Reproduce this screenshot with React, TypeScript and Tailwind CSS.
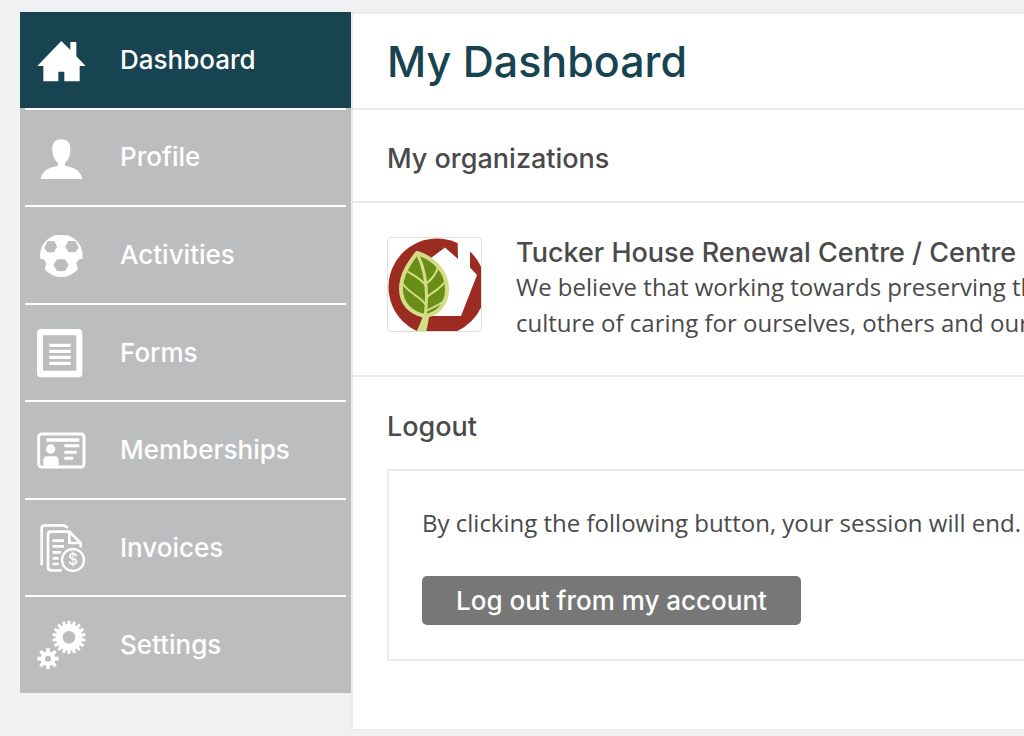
import React, { useState } from "react";

interface MenuItem {
  label: string;
  icon: React.ReactNode;
}

interface GearProps {
  cx: number;
  cy: number;
  body: number;
  outer: number;
  hole: number;
  teeth: number;
  tooth: number;
}

const Gear: React.FC<GearProps> = ({ cx, cy, body, outer, hole, teeth, tooth }) => (
  <g>
    <circle cx={cx} cy={cy} r={(body + hole) / 2} fill="none" stroke="currentColor" strokeWidth={body - hole} />
    {Array.from({ length: teeth }, (_, i) => (
      <rect
        key={i}
        x={cx - tooth / 2}
        y={cy - outer}
        width={tooth}
        height={outer - body + 3}
        rx={2}
        transform={`rotate(${(360 / teeth) * i} ${cx} ${cy})`}
      />
    ))}
  </g>
);

const HomeIcon = () => (
  <path d="M73 15 100 42V18h18v43l28 29h-18v46H82v-29H64v29H19V90H1z" />
);

const ProfileIcon = () => (
  <path d="M73 19C93 19 101 31 100 51C99 71 93 83 84 90V98C108 104 131 109 136 138H11C16 109 39 104 63 98V90C54 83 47 71 46 51C45 31 53 19 73 19Z" />
);

const BallIcon = () => (
  <g>
    <circle cx="73" cy="74" r="64" />
    <g fill="#bcbdbf">
      <path d="M32 30h20l8 17-10 17H31L22 50z" />
      <path d="M115 30H94l-9 17 10 17h20l10-14z" />
      <path d="M60 85h24l11 17-11 18H60l-11-18z" />
      <path d="M57 8h33l-5 5-12-1-11 1z" />
      <path d="M5 84h14l9 13-5 16H5z" />
      <path d="M141 84h-14l-9 13 5 16h18z" />
    </g>
    <path
      d="M60 47h25M50 64l10 21M95 64 84 85M28 97l21 5M118 97l-23 5M60 120l-8 12M84 120l8 12M31 64 19 84M115 64l12 20"
      fill="none"
      stroke="#e8e9ea"
      strokeWidth="1"
    />
  </g>
);

const FormIcon = () => (
  <g>
    <path fillRule="evenodd" d="M12 0h112a12 12 0 0 1 12 12v121a12 12 0 0 1-12 12H12a12 12 0 0 1-12-12V12A12 12 0 0 1 12 0zM18 19v106h100V19z" />
    <path d="M37 44h64v10H37zM37 62h64v10H37zM37 80h64v10H37zM37 98h64v10H37z" />
  </g>
);

const CardIcon = () => (
  <g>
    <rect x="5" y="24" width="136" height="99" rx="9" fill="none" stroke="currentColor" strokeWidth="9" />
    <path d="M28 37h99v10H28zM82 55h45v9H82zM82 74h37v9H82zM82 92h27v9H82z" />
    <circle cx="41" cy="69" r="14" />
    <path d="M19 124V103q0-12 12-12h22q12 0 12 12v21z" />
  </g>
);

const InvoiceIcon = () => (
  <g fill="none" stroke="currentColor" strokeWidth="8" strokeLinecap="round" strokeLinejoin="round">
    <path d="M14 121V14q0-10 10-10h53q7 0 13 6" />
    <path d="M71 139H42q-9 0-9-9V32q0-9 9-9h55l34 34v10M97 23v34h34" />
    <path d="M47 50h34M47 67h34M47 85h25M47 103h18M47 120h18" strokeLinecap="butt" />
    <circle cx="108" cy="108" r="33" strokeWidth="7" />
    <text
      x="108"
      y="124"
      textAnchor="middle"
      fill="currentColor"
      stroke="none"
      className="font-['Inter'] text-[46px] font-medium"
    >
      $
    </text>
  </g>
);

const SettingsIcon = () => (
  <g>
    <Gear cx={96} cy={49} body={40} outer={50} hole={19} teeth={18} tooth={9} />
    <Gear cx={33} cy={113} body={22} outer={32} hole={9} teeth={8} tooth={11} />
  </g>
);

const menu: MenuItem[] = [
  { label: "Dashboard", icon: <HomeIcon /> },
  { label: "Profile", icon: <ProfileIcon /> },
  { label: "Activities", icon: <BallIcon /> },
  { label: "Forms", icon: <FormIcon /> },
  { label: "Memberships", icon: <CardIcon /> },
  { label: "Invoices", icon: <InvoiceIcon /> },
  { label: "Settings", icon: <SettingsIcon /> },
];

const OrganizationLogo = () => (
  <svg viewBox="1 1 93 93" className="size-full" role="img" aria-label="Tucker House">
    <circle cx="50" cy="50" r="48.500" fill="#9c2c22" />
    <path d="M44 21 58 10.500 71 22 70.500 0H83v30.500L90 38 74 79H44z" fill="#fff" />
    <path d="M37 78C36 84 33 89 30 96H38C39 90 41 84 41 78Z" fill="#d3de87" stroke="#d3de87" strokeWidth="2" />
    <path
      d="M30 16C23 25 14 37 14 52C14 66 23 76 38 79C52 77 60 66 60 52C60 35 47 21 30 16Z"
      fill="#698d16"
      stroke="#d3de87"
      strokeWidth="4"
      strokeLinejoin="round"
    />
    <path
      d="M30 16C37 30 42 52 38 80"
      fill="none"
      stroke="#d3de87"
      strokeWidth="3"
    />
    <path
      d="M20 34C26 38 35 42 39 49M51 29C50 36 46 41 40 46M16 47C23 57 34 60 39 68M59 43C55 51 47 54 40 60M57 64C51 69 46 70 39 74"
      fill="none"
      stroke="#d3de87"
      strokeWidth="2"
    />
  </svg>
);

const App: React.FC = () => {
  const [active, setActive] = useState("Dashboard");

  return (
    <div className="flex min-h-screen items-start overflow-hidden bg-[#f0f1f3] pt-3 pl-5 font-['Inter',sans-serif] text-[#4a4a4a]">
      <nav className="w-[331px] shrink-0 bg-[#bcbdbf]">
        <ul className="flex min-h-[681px] flex-col">
          {menu.map((item, index) => (
            <li key={item.label} className="flex flex-1 flex-col">
              <a
                href="#"
                onClick={() => setActive(item.label)}
                className={
                  item.label === active
                    ? "flex flex-1 items-center gap-[35px] bg-[#184350] pl-[17px] text-[26px] leading-8 font-medium text-white"
                    : "flex flex-1 items-center gap-[35px] pl-[17px] text-[26px] leading-8 font-medium text-white"
                }
              >
                <svg viewBox="0 0 144 144" fill="currentColor" className="size-12 overflow-visible" aria-hidden="true">
                  {item.icon}
                </svg>
                {item.label}
              </a>
              {index < menu.length - 1 && <div className="mx-[5px] h-[2px] bg-white" />}
            </li>
          ))}
        </ul>
      </nav>

      <main className="min-w-0 flex-1 overflow-hidden border-y-2 border-l-2 border-[#ebebeb] bg-white whitespace-nowrap">
        <h1 className="border-b-2 border-[#ebebeb] py-5 pl-[34px] text-[43px] leading-[54px] font-medium text-[#184350]">
          My Dashboard
        </h1>

        <h2 className="border-b-2 border-[#ebebeb] pt-[33px] pb-[26px] pl-[34px] text-[27px] leading-8 font-medium">
          My organizations
        </h2>

        <section className="flex gap-[34px] border-b-2 border-[#ebebeb] py-[34px] pl-[34px]">
          <div className="size-[95px] shrink-0 overflow-hidden rounded border border-[#dedede]">
            <OrganizationLogo />
          </div>
          <div>
            <h3 className="text-[27px] leading-8 font-medium">Tucker House Renewal Centre / Centre</h3>
            <p className="font-['Open_Sans',sans-serif] text-2xl leading-9">
              We believe that working towards preserving the
              <br />
              culture of caring for ourselves, others and our
            </p>
          </div>
        </section>

        <section className="pt-[34px] pb-[68px] pl-[34px]">
          <h2 className="text-[27px] leading-8 font-medium">Logout</h2>
          <div className="mt-[26px] border-y-2 border-l-2 border-[#ebebeb] px-[33px] py-[34px]">
            <p className="font-['Open_Sans',sans-serif] text-2xl leading-9">
              By clicking the following button, your session will end.
            </p>
            <button className="mt-[35px] rounded-[5px] bg-[#777] px-[34px] pt-[9px] pb-2 text-[26px] leading-8 font-medium text-white">
              Log out from my account
            </button>
          </div>
        </section>
      </main>
    </div>
  );
};

export default App;
